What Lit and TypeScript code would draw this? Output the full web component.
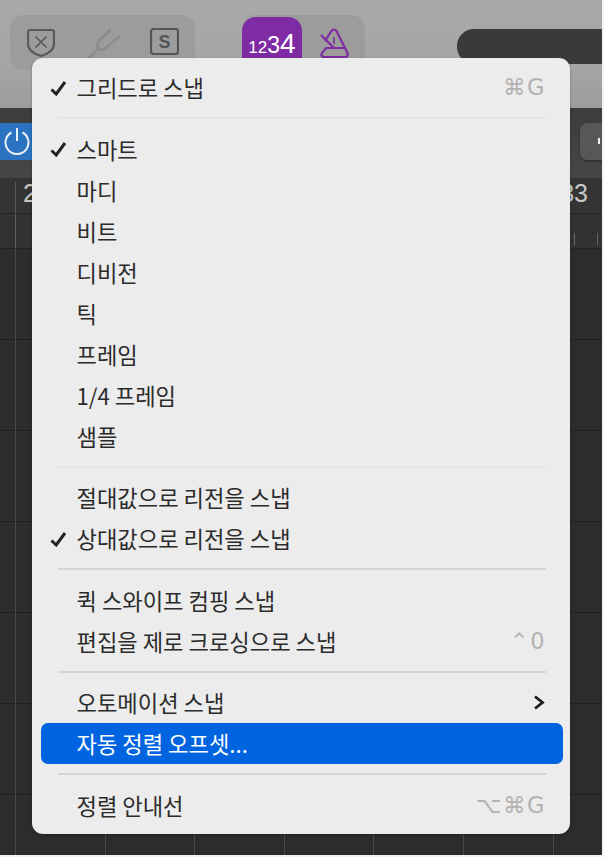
import { LitElement, html, css, svg } from "lit";
import { customElement } from "lit/decorators.js";

type Row = { t: string; check?: boolean; key?: string; sub?: boolean; active?: boolean };
type Group = { rows: Row[]; faint?: boolean };

const GROUPS: Group[] = [
  { faint: true, rows: [{ t: "그리드로 스냅", check: true, key: "⌘G" }] },
  {
    faint: true,
    rows: [
      { t: "스마트", check: true },
      { t: "마디" },
      { t: "비트" },
      { t: "디비전" },
      { t: "틱" },
      { t: "프레임" },
      { t: "1/4 프레임" },
      { t: "샘플" },
    ],
  },
  { rows: [{ t: "절대값으로 리전을 스냅" }, { t: "상대값으로 리전을 스냅", check: true }] },
  { rows: [{ t: "퀵 스와이프 컴핑 스냅" }, { t: "편집을 제로 크로싱으로 스냅", key: "⌃0" }] },
  { rows: [{ t: "오토메이션 스냅", sub: true }, { t: "자동 정렬 오프셋...", active: true }] },
  { rows: [{ t: "정렬 안내선", key: "⌥⌘G" }] },
];

const checkIcon = svg`<path d="M1.5 9.5 L6.2 14 L15 2" fill="none" stroke="#222" stroke-width="3"/>`;
const chevron = svg`<path d="M2 1.5 L9.5 7.5 L2 13.5" fill="none" stroke="#1c1c1c" stroke-width="2.8"/>`;

@customElement("app-root")
export class AppRoot extends LitElement {
  static styles = css`
    :host {
      display: block;
      position: relative;
      width: 604px;
      height: 857px;
      overflow: hidden;
      background: #f4f4f4;
      font-family: "Noto Sans CJK KR", "Liberation Sans", sans-serif;
    }
    .frame {
      width: 602px;
      height: 855px;
      overflow: hidden;
      background: #2b2b2b;
    }
    .toolbar {
      height: 108px;
      box-sizing: border-box;
      display: flex;
      align-items: flex-start;
      background: linear-gradient(#a9a9a9, #a5a5a5 60%, #9d9d9d);
    }
    .pill {
      margin-top: 15px;
      height: 55px;
      border-radius: 14px;
      background: #9c9c9c;
      display: flex;
      align-items: flex-start;
    }
    .pill.left {
      margin-left: 10px;
      width: 185px;
      padding: 13px 0 0 17px;
      box-sizing: border-box;
      gap: 29px;
    }
    .pill.right {
      margin-left: 47px;
      width: 123px;
      gap: 17px;
    }
    .tile {
      margin-top: 2px;
      width: 60px;
      height: 56px;
      border-radius: 14px;
      background: #7f2ba4;
      color: #fff;
      font-family: "Liberation Sans", sans-serif;
      display: flex;
      align-items: baseline;
      justify-content: center;
      line-height: 52px;
      padding-top: 1px;
      box-sizing: border-box;
    }
    .n1, .n2 { font-size: 17px; }
    .n3 { font-size: 23px; }
    .n4 { font-size: 28px; }
    .metro { margin-top: 13px; }
    .dark {
      margin: 29px 0 0 92px;
      flex: 1;
      height: 35px;
      border-radius: 17px 0 0 17px;
      background: #3a3a3a;
    }
    .controls {
      height: 70px;
      box-sizing: border-box;
      padding-top: 15px;
      display: flex;
      justify-content: space-between;
      align-items: flex-start;
      background: linear-gradient(#3c3c3c, #464646);
    }
    .power {
      width: 34px;
      height: 37px;
      background: #2b72c0;
      display: flex;
      align-items: center;
      justify-content: center;
    }
    .btn {
      width: 22px;
      height: 37px;
      border-radius: 7px 0 0 7px;
      background: #575757;
      box-shadow: 0 1px 2px rgba(0, 0, 0, 0.4);
      box-sizing: border-box;
      padding: 15px 0 0 18px;
    }
    .btn i {
      display: block;
      width: 2px;
      height: 6px;
      background: #f0f0f0;
    }
    .ruler {
      height: 36px;
      box-sizing: border-box;
      display: flex;
      justify-content: space-between;
      padding: 0 14px 0 23px;
      line-height: 30px;
      font-family: "Liberation Sans", sans-serif;
      font-size: 25px;
      color: #c8c8c8;
      background:
        linear-gradient(#585858, #585858) 15px 4px / 1px 100% no-repeat,
        #343434;
      border-bottom: 1px solid #222;
    }
    .ticks {
      height: 34px;
      background:
        linear-gradient(#5e5e5e, #5e5e5e) 15px 0 / 1px 100% no-repeat,
        linear-gradient(#666, #666) 574px 19px / 1px 12px no-repeat,
        linear-gradient(#666, #666) 597px 19px / 1px 12px no-repeat,
        #323232;
      border-bottom: 1px solid #242424;
    }
    .grid {
      height: 607px;
      background:
        repeating-linear-gradient(90deg, #4a4a4a 0 1px, transparent 1px 89.6px) 15px 0 / 100% 100% no-repeat,
        repeating-linear-gradient(180deg, transparent 0 90px, #1f1f1f 90px 91px),
        #2c2c2c;
    }
    .menu {
      position: absolute;
      left: 32px;
      top: 58px;
      width: 538px;
      height: 776px;
      box-sizing: border-box;
      padding: 9px 7px 0 9px;
      border-radius: 11px;
      background: #ececec;
      box-shadow: 0 1px 3px rgba(0, 0, 0, 0.25);
    }
    .row {
      height: 41px;
      border-radius: 7px;
      display: grid;
      grid-template-columns: 35.5px 1fr auto;
      align-items: center;
      padding-right: 18px;
      font-size: 22.2px;
      line-height: 41px;
      color: #2b2b2b;
    }
    .row.active {
      background: #0064e1;
      color: #fff;
    }
    .check {
      padding-left: 9px;
      display: flex;
    }
    .key {
      font-family: "DejaVu Sans", "Liberation Sans", sans-serif;
      color: #b2b2b2;
      font-size: 22.5px;
      letter-spacing: 1.5px;
      margin-right: -1px;
    }
    .sep {
      margin: 9.25px 17px;
      height: 2px;
      background: #d4d4d4;
    }
    .sep.faint { background: #e5e5e5; }
  `;

  private renderRow(r: Row) {
    return html`<div class="row ${r.active ? "active" : ""}">
      <span class="check">${r.check
        ? html`<svg width="17" height="16" viewBox="0 0 17 16">${checkIcon}</svg>`
        : ""}</span>
      <span>${r.t}</span>
      ${r.key ? html`<span class="key">${r.key}</span>` : ""}
      ${r.sub ? html`<svg width="12" height="15" viewBox="0 0 12 15">${chevron}</svg>` : ""}
    </div>`;
  }

  render() {
    return html`
      <div class="frame">
        <div class="toolbar">
          <div class="pill left">
            <svg width="28" height="30" viewBox="0 0 28 30" fill="none" stroke="#5a5a5a" stroke-width="2.2">
              <path d="M3 2 H25 Q27 2 27 4 V16 Q27 24 14 28 Q1 24 1 16 V4 Q1 2 3 2 Z" />
              <path d="M8.5 8.5 L19.5 19.5 M19.5 8.5 L8.5 19.5" stroke-width="1.7" />
            </svg>
            <svg width="37" height="32" viewBox="-4 0 37 32" fill="none" stroke="#8a8a8a" stroke-width="2.2">
              <path d="M0 31 L10 21 Q8 16 11 13 L23 1 M10 21 Q15 23 19 19 L32 8" />
            </svg>
            <svg width="29" height="27" viewBox="0 0 29 27" fill="none" stroke="#555" stroke-width="2.2">
              <rect x="1" y="1" width="27" height="25" rx="2.5" />
              <text x="14.5" y="20" text-anchor="middle" font-family="Liberation Sans" font-size="18" font-weight="700" fill="#555" stroke="none">S</text>
            </svg>
          </div>
          <div class="pill right">
            <div class="tile">
              <span class="n1">1</span><span class="n2">2</span><span class="n3">3</span><span class="n4">4</span>
            </div>
            <svg class="metro" width="32" height="30" viewBox="0 0 32 30" fill="none" stroke="#7f2ba4" stroke-width="2.2">
              <path d="M6 13 L12.5 3 Q15 0 17.5 3 L28 24 Q30 29 26 29 H6 Q1 29 3 25 L7 20 H25" />
              <path d="M2 7 L16 21" />
              <path d="M15 9 V16" stroke-width="1.6" />
            </svg>
          </div>
          <div class="dark"></div>
        </div>
        <div class="controls">
          <div class="power">
            <svg width="26" height="27" viewBox="0 0 26 27" fill="none" stroke="#e8eff7" stroke-width="2">
              <path d="M7.5 4.5 A11.5 11.5 0 1 0 18.5 4.5" />
              <path d="M13 0 V13" />
            </svg>
          </div>
          <div class="btn"><i></i></div>
        </div>
        <div class="ruler"><span>2</span><span>33</span></div>
        <div class="ticks"></div>
        <div class="grid"></div>
      </div>
      <div class="menu">
        ${GROUPS.map(
          (g, i) => html`
            ${g.rows.map((r) => this.renderRow(r))}
            ${i < GROUPS.length - 1
              ? html`<div class="sep ${g.faint ? "faint" : ""}"></div>`
              : ""}
          `
        )}
      </div>
    `;
  }
}
